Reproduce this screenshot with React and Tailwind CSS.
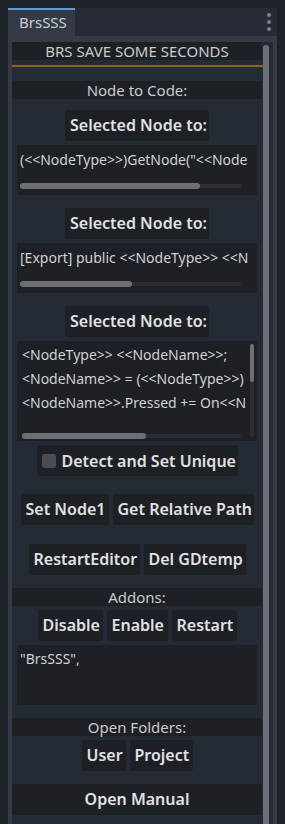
import React from 'react';

const font = { fontFamily: '"Noto Sans", "Open Sans", sans-serif' };

const Label = ({ children }) => (
  <div className="h-[18px] bg-[#1d2024] text-[15px] leading-[18px] text-center text-[#c9cbce]">{children}</div>
);

const Btn = ({ children, className = '' }) => (
  <div className={`h-[31px] px-[5px] rounded-[3px] bg-[#1d2024] text-[16px] font-semibold leading-[31px] text-[#e0e1e3] whitespace-nowrap ${className}`}>
    {children}
  </div>
);

const HScroll = ({ thumb, className = '' }) => (
  <div className={`relative h-[6px] ${className}`}>
    <div className="absolute inset-x-0 top-[1px] h-[4px] rounded-full bg-[#2b2e33]" />
    <div className="absolute left-0 top-0 h-[6px] rounded-full bg-[#6c6f74]" style={{ width: thumb }} />
  </div>
);

const CodeBox = ({ text, thumb }) => (
  <div className="mx-[5px] h-[50px] bg-[#1d2024] flex flex-col">
    <div className="h-[30px] pl-[3px] whitespace-nowrap text-[14px] leading-[30px] text-[#cfd1d4]">{text}</div>
    <HScroll thumb={thumb} className="mx-[3px] mr-[16px] mt-[8px]" />
  </div>
);

export default function App() {
  return (
    <div className="w-[285px] h-[824px] overflow-hidden bg-[#1d2229] pl-[8px] pr-[8px] pt-[8px]" style={font}>
      {/* tab bar */}
      <div className="flex h-[28px] bg-[#262b35]">
        <div className="w-[67px] bg-[#343b47] border-t-2 border-[#5c9dd8] pl-[11px] text-[15px] leading-[25px] text-[#c9cbce]">BrsSSS</div>
        <div className="flex-1" />
        <div className="w-[12px] flex flex-col items-center justify-center gap-[3px] mr-[2px]">
          <div className="w-[4px] h-[4px] rounded-full bg-[#7d8188]" />
          <div className="w-[4px] h-[4px] rounded-full bg-[#7d8188]" />
          <div className="w-[4px] h-[4px] rounded-full bg-[#7d8188]" />
        </div>
      </div>

      {/* panel */}
      <div className="h-[800px] bg-[#343b47] px-[4px] pt-[6px]">
        <div className="h-full bg-[#252b34] flex">
          <div className="w-[250px] flex flex-col">
            <Label>BRS SAVE SOME SECONDS</Label>
            <div className="mt-[5px] h-[2px] bg-[#8f6515] -mr-[1px]" />
            <div className="mt-[14px]"><Label>Node to Code:</Label></div>

            <div className="mt-[11px] flex justify-center"><Btn className="w-[144px] text-center">Selected Node to:</Btn></div>
            <div className="mt-[4px]"><CodeBox text={'(<<NodeType>>)GetNode("<<Node'} thumb={180} /></div>

            <div className="mt-[13px] flex justify-center"><Btn className="w-[144px] text-center">Selected Node to:</Btn></div>
            <div className="mt-[4px]"><CodeBox text={'[Export] public <<NodeType>> <<N'} thumb={112} /></div>

            <div className="mt-[13px] flex justify-center"><Btn className="w-[144px] text-center">Selected Node to:</Btn></div>
            <div className="mt-[4px] mx-[5px] h-[100px] bg-[#1d2024] relative">
              <div className="pl-[5px] pt-[2px] whitespace-nowrap text-[14px] leading-[24px] text-[#cfd1d4]">
                <div>{'<NodeType>> <<NodeName>>;'}</div>
                <div>{'<NodeName>> = (<<NodeType>>)'}</div>
                <div>{'<NodeName>>.Pressed += On<<N'}</div>
              </div>
              <div className="absolute left-[5px] right-[16px] top-[92px]">
                <HScroll thumb={124} />
              </div>
              <div className="absolute top-[3px] bottom-[4px] left-[233px] w-[4px] rounded-full bg-[#2b2e33]">
                <div className="h-[38px] w-[4px] rounded-full bg-[#6c6f74]" />
              </div>
            </div>

            <div className="mt-[4px] flex justify-center">
              <div className="w-[201px] h-[31px] rounded-[3px] bg-[#1d2024] flex items-center pl-[5px] gap-[6px]">
                <div className="w-[14px] h-[14px] rounded-[2px] bg-[#4a4d52]" />
                <span className="text-[16px] font-semibold text-[#e0e1e3]">Detect and Set Unique</span>
              </div>
            </div>

            <div className="mt-[18px] flex justify-center gap-[4px]">
              <Btn className="w-[88px] text-center">Set Node1</Btn>
              <Btn className="w-[141px] text-center">Get Relative Path</Btn>
            </div>

            <div className="mt-[19px] flex justify-center gap-[4px]">
              <Btn className="w-[111px] text-center">RestartEditor</Btn>
              <Btn className="w-[102px] text-center">Del GDtemp</Btn>
            </div>

            <div className="mt-[13px]"><Label>Addons:</Label></div>
            <div className="mt-[4px] flex justify-center gap-[4px]">
              <Btn className="w-[65px] text-center">Disable</Btn>
              <Btn className="w-[61px] text-center">Enable</Btn>
              <Btn className="w-[65px] text-center">Restart</Btn>
            </div>
            <div className="mt-[4px] mx-[5px] h-[60px] bg-[#1d2024] pl-[3px] pt-[2px] text-[14px] leading-[24px] text-[#cfd1d4]">"BrsSSS",</div>

            <div className="mt-[13px]"><Label>Open Folders:</Label></div>
            <div className="mt-[4px] flex justify-center gap-[4px]">
              <Btn className="w-[44px] text-center">User</Btn>
              <Btn className="w-[63px] text-center">Project</Btn>
            </div>

            <div className="mt-[13px]"><Btn className="text-center">Open Manual</Btn></div>
          </div>

          {/* main scrollbar */}
          <div className="w-[11px] pl-[1px] pt-[3px]">
            <div className="w-[6px] h-[900px] rounded-[3px] bg-[#6c6f74]" />
          </div>
        </div>
      </div>
    </div>
  );
}
